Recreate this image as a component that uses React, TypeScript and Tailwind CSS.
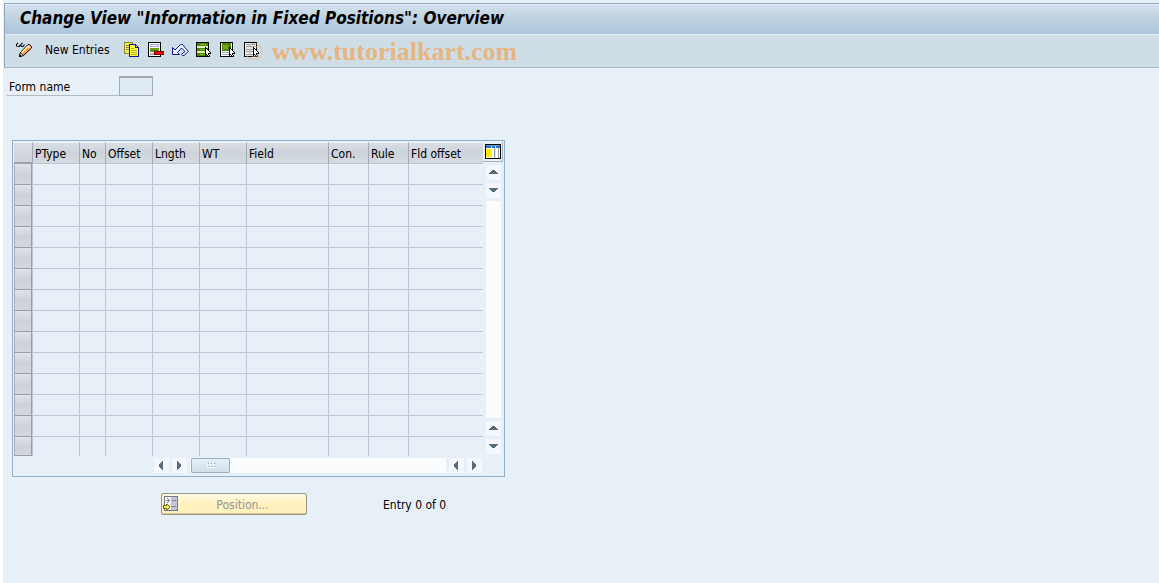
import React from "react";

const COLUMNS = [
  { label: "PType", width: "w-[47px]" },
  { label: "No", width: "w-[26px]" },
  { label: "Offset", width: "w-[47px]" },
  { label: "Lngth", width: "w-[47px]" },
  { label: "WT", width: "w-[47px]" },
  { label: "Field", width: "w-[82px]" },
  { label: "Con.", width: "w-[40px]" },
  { label: "Rule", width: "w-[40px]" },
  { label: "Fld offset", width: "w-[75px]" },
];

const ROW_COUNT = 14;

function Icon({ children }: { children: React.ReactNode }) {
  return (
    <svg width="16" height="16" viewBox="0 0 16 16" shapeRendering="crispEdges" aria-hidden="true">
      {children}
    </svg>
  );
}

function ToggleIcon() {
  return (
    <svg width="17" height="16" viewBox="0 0 17 16" aria-hidden="true">
      <path
        d="M.5 4.5 V2.5 L2 .8 M4.5 3 L6.5 .8 M1.5 4.5 H3 L4.5 3 L5.5 4.5 H7 L8.5 2.5"
        fill="none"
        stroke="#000"
        strokeWidth="1.1"
      />
      <path d="M3.5 14.5 L4.5 10.5 L12 2.5 H13.5 L15.5 4.5 V6 L7.5 13.5 Z" fill="#fca234" stroke="#000" />
      <path d="M5.5 10.8 L12 4.2" stroke="#fff3a0" strokeWidth="1.5" />
      <path d="M12 3.8 L14.3 6" stroke="#f8d8e0" strokeWidth="1.8" />
      <path d="M3.5 14.5 L4.5 10.8 L7.3 13.5 Z" fill="#fff" stroke="#000" strokeWidth=".8" />
      <path d="M3 13 h2 v2 h-2 z" fill="#000" />
    </svg>
  );
}

function CopyIcon() {
  return (
    <Icon>
      <path d="M0 0h9v12h-9z" fill="#8c8a24" />
      <path d="M1 1h7v10h-7z" fill="#f2ee62" />
      <path d="M2 3h5v1h-5zM2 5h5v1h-5zM2 7h5v1h-5z" fill="#8c8a24" />
      <path d="M5 2h7v1h1v1h1v1h1v10h-10z" fill="#1414a0" />
      <path d="M6 3h5v3h3v8h-8z" fill="#ffff3c" />
      <path d="M12 4h1v1h-1z" fill="#fff" />
      <path d="M7 6h3v1h-3zM7 8h6v1h-6zM7 10h6v1h-6zM7 12h6v1h-6z" fill="#b5b030" />
    </Icon>
  );
}

function DeleteIcon() {
  return (
    <Icon>
      <path d="M0 0h13v15h-13z" fill="#000" />
      <path d="M1 1h11v13h-11z" fill="#fff" />
      <path d="M2 2h9v3h-9zM2 11h9v2h-9z" fill="#a9a5d6" />
      <path d="M3 3h7v1h-7z" fill="#fff" />
      <path d="M2 6h9v4h-9z" fill="#6f9c10" />
      <path d="M3 8h7v1h-7z" fill="#4e7a00" />
      <path d="M6 9h10v4h-10z" fill="#7c0000" />
      <path d="M7 10h9v2h-9z" fill="#ff0000" />
    </Icon>
  );
}

function UndoIcon() {
  return (
    <svg width="17" height="16" viewBox="0 0 17 16" aria-hidden="true">
      <path
        d="M.5 5.5 V12.5 H7.5 L5.5 10.5 L9.5 6 L13 9.5 L9.5 12.5 L10.5 13.5 H12 L16.3 9.5 L10.5 2.5 H8.5 L3 8 Z"
        fill="#e8f2fc"
        stroke="#17178c"
      />
    </svg>
  );
}

function Cursor() {
  return (
    <>
      <path d="M9 5h1v1h1v1h1v1h1v1h1v1h1v2h-2v1h1v2h-3v-2h-1v1h-1z" fill="#000" />
      <path d="M10 7h1v1h1v1h1v1h1v1h-2v2h1v1h-1v-1h-1v-1h-1z" fill="#fff" />
    </>
  );
}

function SelectAllIcon() {
  return (
    <Icon>
      <path d="M0 0h13v15h-13z" fill="#000" />
      <path d="M1 1h11v13h-11z" fill="#dff0c0" />
      <path d="M1 1h11v3h-11zM1 6h11v3h-11zM1 11h11v3h-11z" fill="#4e8600" />
      <path d="M4 2h6v1h-6zM4 7h5v1h-5zM4 12h5v1h-5z" fill="#83b51c" />
      <Cursor />
    </Icon>
  );
}

function SelectBlockIcon() {
  return (
    <Icon>
      <path d="M0 0h13v15h-13z" fill="#000" />
      <path d="M1 1h11v13h-11z" fill="#fff" />
      <path d="M2 1h9v8h-9z" fill="#4e8600" />
      <path d="M3 3h5v4h-5z" fill="#7da620" />
      <path d="M2 10h8v1h-8zM2 12h8v1h-8z" fill="#91a9c4" />
      <Cursor />
    </Icon>
  );
}

function DeselectIcon() {
  return (
    <Icon>
      <path d="M0 0h13v15h-13z" fill="#000" />
      <path d="M1 1h11v13h-11z" fill="#f3f8fc" />
      <path d="M2 2h9v1h-9zM2 4h9v1h-9zM2 7h8v1h-8zM2 9h8v1h-8zM2 12h8v1h-8z" fill="#8095b0" />
      <Cursor />
    </Icon>
  );
}

function ConfigIcon() {
  return (
    <Icon>
      <path d="M0 0h16v15h-16z" fill="#000" />
      <path d="M1 1h14v13h-14z" fill="#fff" />
      <path d="M1 1h14v3h-14z" fill="#2874b8" />
      <path d="M1 1h14v1h-14z" fill="#5e9cd4" />
      <path d="M1 5h5v8h-5z" fill="#ffe800" />
      <path d="M6 2h1v12h-1zM10 2h1v12h-1z" fill="#dce4ec" />
      <path d="M9 4h1v10h-1zM13 4h1v10h-1z" fill="#929ba5" />
    </Icon>
  );
}

function PositionIcon() {
  return (
    <Icon>
      <path d="M1 0h14v15h-14z" fill="#77777c" />
      <path d="M2 1h12v13h-12z" fill="#f1f1f4" />
      <path d="M8 1h6v13h-6z" fill="#c2c4de" />
      <path d="M3 4h4v1h-4zM9 4h4v1h-4zM8 10h5v1h-5zM4 2h1v1h-1zM5 3h1v3h-1zM4 6h1v1h-1z" fill="#85858c" />
      <path d="M0 9h3v-1h2v1h1v1h1v2h-1v1h-1v1h-2v-1h-3z" fill="#77701c" />
      <path d="M1 10h3v-1h1v1h1v2h-1v1h-1v-1h-3z" fill="#f0e850" />
    </Icon>
  );
}

const ARROWS = {
  up: "M3 9h9v-1h-1v-1h-1v-1h-1v-1h-3v1h-1v1h-1v1h-1z",
  down: "M3 5h9v1h-1v1h-1v1h-1v1h-3v-1h-1v-1h-1v-1h-1z",
  left: "M9 3v9h-1v-1h-1v-1h-1v-1h-1v-3h1v-1h1v-1h1v-1z",
  right: "M5 3v9h1v-1h1v-1h1v-1h1v-3h-1v-1h-1v-1h-1v-1z",
};

function ArrowButton({ dir, label }: { dir: keyof typeof ARROWS; label: string }) {
  return (
    <button type="button" aria-label={label} className="size-[15px] shrink-0 bg-[#f4f8fc]">
      <svg width="15" height="15" viewBox="0 0 15 15" shapeRendering="crispEdges" aria-hidden="true">
        <path d={ARROWS[dir]} fill="#566b7b" />
      </svg>
    </button>
  );
}

const TOOLS = [
  { label: "Copy As", icon: <CopyIcon /> },
  { label: "Delete", icon: <DeleteIcon /> },
  { label: "Undo Change", icon: <UndoIcon /> },
  { label: "Select All", icon: <SelectAllIcon /> },
  { label: "Select Block", icon: <SelectBlockIcon /> },
  { label: "Deselect All", icon: <DeselectIcon /> },
];

function Toolbar() {
  return (
    <div className="relative flex h-8 items-center bg-[#cfdde7] pb-[2px] pl-[11px]">
      <button type="button" aria-label="Display/Change" className="mr-3">
        <ToggleIcon />
      </button>
      <button type="button" className="mr-[14px] whitespace-nowrap">
        New Entries
      </button>
      <div className="flex gap-2">
        {TOOLS.map((tool) => (
          <button key={tool.label} type="button" aria-label={tool.label} className="w-4">
            {tool.icon}
          </button>
        ))}
      </div>
      <div className="pointer-events-none absolute top-0 left-[239px] flex h-8 items-center gap-2 pt-[2px] font-['Liberation_Serif',serif] text-[26px] whitespace-nowrap text-[#e5b582]">
        <span className="opacity-60">©</span>
        <span className="font-bold">www.tutorialkart.com</span>
      </div>
    </div>
  );
}

function EntryTable() {
  return (
    <table className="w-[469px] table-fixed border-separate border-spacing-0">
      <colgroup>
        <col className="w-[18px]" />
        {COLUMNS.map((c) => (
          <col key={c.label} className={c.width} />
        ))}
      </colgroup>
      <thead>
        <tr className="h-[22px]">
          <th
            aria-label="Row selector"
            className="border-t border-b-2 border-t-[#eef2f6] border-b-[#9ba3b2] bg-linear-to-b from-[#dadfe4] to-[#cdd3da] p-0"
          />
          {COLUMNS.map((c) => (
            <th
              key={c.label}
              scope="col"
              className="border-t border-b border-l border-t-[#eef2f6] border-b-[#bcc3d2] border-l-[#a4abb8] bg-linear-to-b from-[#dadfe4] via-[#cdd3da] to-[#d6dbe0] p-0 pt-[2px] pl-[2px] text-left font-normal whitespace-nowrap"
            >
              {c.label}
            </th>
          ))}
        </tr>
      </thead>
      <tbody>
        {Array.from({ length: ROW_COUNT }, (_, row) => (
          <tr key={row} className="group h-[21px] last:h-[19px]">
            <td className="border-r border-b border-l border-r-[#969dac] border-b-[#969dac] border-l-[#a9b0bd] bg-linear-to-b from-[#e0e4e9] via-[#cdd2d9] to-[#d3d7dd] p-0" />
            {COLUMNS.map((c) => (
              <td key={c.label} className="border-b border-l border-[#bec6d8] p-0 group-last:border-b-0" />
            ))}
          </tr>
        ))}
      </tbody>
    </table>
  );
}

export default function App() {
  return (
    <div className="min-h-screen bg-white pl-[3px] font-['DejaVu_Sans_Condensed','DejaVu_Sans',sans-serif] text-xs text-black">
      <div className="min-h-screen bg-[#e8f0f7] pt-[3px]">
        <header className="ml-px border-t border-b border-l border-t-[#91a9bf] border-b-[#a5b7c6] border-l-[#91a9bf]">
          <div className="flex h-[31px] items-center border-t border-b border-t-[#e6eff7] border-b-[#e6eff7] bg-linear-to-b from-[#d3e1ed] via-[#bdd1df] to-[#adc4dd] pb-1 pl-[15px]">
            <h1 className="text-[17px] leading-6 font-bold whitespace-nowrap italic">
              Change View "Information in Fixed Positions": Overview
            </h1>
          </div>
          <Toolbar />
        </header>

        <main>
          <div className="mt-2 ml-1 flex">
            <label htmlFor="form-name" className="flex h-5 w-28 items-center border-b border-[#b4bac0] pt-[2px] pl-[2px]">
              Form name
            </label>
            <input
              id="form-name"
              type="text"
              className="h-5 w-[34px] border border-t-2 border-[#a3a9ae] bg-[#deeaf4] px-1 outline-none"
            />
          </div>

          <section className="mt-11 ml-[9px] w-[493px] border border-[#8eaecb] p-px pb-[3px]">
            <div className="flex">
              <EntryTable />
              <div className="flex grow flex-col items-center">
                <button
                  type="button"
                  aria-label="Table settings"
                  className="flex h-5 w-full items-center justify-center border-r border-b border-[#a7b0bd]"
                >
                  <ConfigIcon />
                </button>
                <div className="mt-[3px] mb-[2px] flex w-[15px] grow flex-col gap-[3px]">
                  <ArrowButton dir="up" label="Scroll up" />
                  <ArrowButton dir="down" label="Scroll down" />
                  <div className="grow bg-[#fbfcfd]" />
                  <ArrowButton dir="up" label="Page up" />
                  <ArrowButton dir="down" label="Page down" />
                </div>
              </div>
            </div>
            <div className="mt-[2px] mr-[21px] ml-[140px] flex gap-[3px]">
              <ArrowButton dir="left" label="Scroll left" />
              <ArrowButton dir="right" label="Scroll right" />
              <div className="flex grow bg-[#fbfcfd] pl-px">
                <button
                  type="button"
                  aria-label="Horizontal scroll position"
                  className="flex h-[15px] w-[39px] items-center justify-center rounded-[1px] border border-[#9dafc2] bg-linear-to-b from-[#e6eff6] to-[#d0dfeb]"
                >
                  <svg width="8" height="5" viewBox="0 0 8 5" shapeRendering="crispEdges" aria-hidden="true">
                    <path d="M0 0h2v2h-2zM3 0h2v2h-2zM6 0h2v2h-2zM0 3h2v2h-2zM3 3h2v2h-2zM6 3h2v2h-2z" fill="#fff" />
                    <path d="M1 0h1v1h-1zM4 0h1v1h-1zM7 0h1v1h-1zM1 3h1v1h-1zM4 3h1v1h-1zM7 3h1v1h-1z" fill="#8ca2b8" />
                  </svg>
                </button>
              </div>
              <ArrowButton dir="left" label="Page left" />
              <ArrowButton dir="right" label="Page right" />
            </div>
          </section>

          <div className="mt-4 ml-[158px] flex items-center">
            <button
              type="button"
              className="flex h-[22px] w-[146px] items-center rounded-[2px] border border-[#98958a] bg-linear-to-b from-[#fffae6] via-[#fff1bd] to-[#fff2c0] pl-px text-[#93939b] shadow-[inset_0_-1px_0_#d5c78e]"
            >
              <PositionIcon />
              <span className="grow pt-px text-center">Position...</span>
            </button>
            <span className="ml-[76px] pt-px">Entry 0 of 0</span>
          </div>
        </main>
      </div>
    </div>
  );
}
